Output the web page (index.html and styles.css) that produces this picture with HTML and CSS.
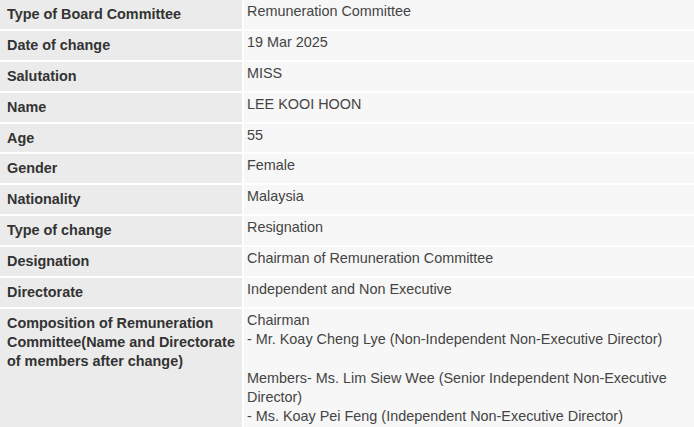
FILE: index.html
```html
<!DOCTYPE html>
<html>
<head>
<meta charset="utf-8">
<link rel="stylesheet" href="styles.css">
</head>
<body>
<div class="details">
  <div class="label">Type of Board Committee</div><div class="value">Remuneration Committee</div>
  <div class="label">Date of change</div><div class="value">19 Mar 2025</div>
  <div class="label">Salutation</div><div class="value">MISS</div>
  <div class="label">Name</div><div class="value">LEE KOOI HOON</div>
  <div class="label">Age</div><div class="value">55</div>
  <div class="label">Gender</div><div class="value">Female</div>
  <div class="label">Nationality</div><div class="value">Malaysia</div>
  <div class="label">Type of change</div><div class="value">Resignation</div>
  <div class="label">Designation</div><div class="value">Chairman of Remuneration Committee</div>
  <div class="label">Directorate</div><div class="value">Independent and Non Executive</div>
  <div class="label">Composition of Remuneration Committee(Name and Directorate of members after change)</div>
  <div class="value">Chairman<br>- Mr. Koay Cheng Lye (Non-Independent Non-Executive Director)<br><br>Members- Ms. Lim Siew Wee (Senior Independent Non-Executive Director)<br>- Ms. Koay Pei Feng (Independent Non-Executive Director)<br><br></div>
</div>
</body>
</html>
```

FILE: styles.css
```css
html, body {
  margin: 0;
  padding: 0;
  background: #ffffff;
  overflow: hidden;
}
.details {
  display: grid;
  grid-template-columns: 242px 1fr;
  column-gap: 2px;
  row-gap: 2px;
  width: 694px;
  font-family: "Liberation Sans", Arial, sans-serif;
  font-size: 14.4px;
}
.label {
  background: #ebebeb;
  color: #333333;
  font-weight: bold;
  padding: 5px 5px 4.7px 7px;
  line-height: 19.2px;
}
.value {
  background: #f7f7f7;
  color: #444444;
  padding: 2px 8px 7.7px 3px;
  line-height: 19.2px;
}
```
